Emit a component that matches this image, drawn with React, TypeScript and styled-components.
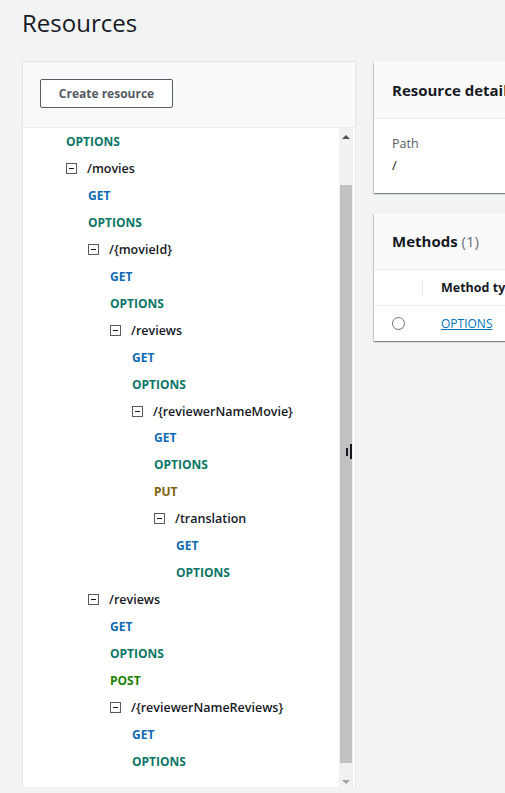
import styled, { createGlobalStyle } from 'styled-components';

const GlobalStyle = createGlobalStyle`
    html, body{
        margin: 0;
        padding: 0;
        background: #f2f3f3;
        font-family: "Open Sans", "Noto Sans", Arial, sans-serif;
        color: #16191f;
        overflow: hidden;
    }
`;

type Method = 'GET' | 'OPTIONS' | 'PUT' | 'POST';
type Row = { kind: 'method'; name: Method; depth: number } | { kind: 'resource'; path: string; depth: number };

const rows: Row[] = [
    { kind: 'method', name: 'OPTIONS', depth: 0 },
    { kind: 'resource', path: '/movies', depth: 0 },
    { kind: 'method', name: 'GET', depth: 1 },
    { kind: 'method', name: 'OPTIONS', depth: 1 },
    { kind: 'resource', path: '/{movieId}', depth: 1 },
    { kind: 'method', name: 'GET', depth: 2 },
    { kind: 'method', name: 'OPTIONS', depth: 2 },
    { kind: 'resource', path: '/reviews', depth: 2 },
    { kind: 'method', name: 'GET', depth: 3 },
    { kind: 'method', name: 'OPTIONS', depth: 3 },
    { kind: 'resource', path: '/{reviewerNameMovie}', depth: 3 },
    { kind: 'method', name: 'GET', depth: 4 },
    { kind: 'method', name: 'OPTIONS', depth: 4 },
    { kind: 'method', name: 'PUT', depth: 4 },
    { kind: 'resource', path: '/translation', depth: 4 },
    { kind: 'method', name: 'GET', depth: 5 },
    { kind: 'method', name: 'OPTIONS', depth: 5 },
    { kind: 'resource', path: '/reviews', depth: 1 },
    { kind: 'method', name: 'GET', depth: 2 },
    { kind: 'method', name: 'OPTIONS', depth: 2 },
    { kind: 'method', name: 'POST', depth: 2 },
    { kind: 'resource', path: '/{reviewerNameReviews}', depth: 2 },
    { kind: 'method', name: 'GET', depth: 3 },
    { kind: 'method', name: 'OPTIONS', depth: 3 },
];

const methodColors: Record<Method, string> = {
    GET: '#0f6ab4',
    OPTIONS: '#0b7667',
    PUT: '#7d6410',
    POST: '#1d8102',
};

export default function App() {
    return (
        <Page>
            <GlobalStyle />
            <Title>Resources</Title>
            <Columns>
                <TreePanel>
                    <TreeHeader>
                        <CreateButton>Create resource</CreateButton>
                    </TreeHeader>
                    <TreeBody>
                        <TreeList>
                            {rows.map((row, i) => (
                                <TreeRow key={i} $depth={row.depth}>
                                    {row.kind === 'method' ? (
                                        <MethodName $color={methodColors[row.name]}>{row.name}</MethodName>
                                    ) : (
                                        <>
                                            <Expander>
                                                <svg width="11" height="11" viewBox="0 0 11 11">
                                                    <rect x="0.5" y="0.5" width="10" height="10" fill="#fff" stroke="#545b64" />
                                                    <rect x="3" y="5" width="5" height="1" fill="#16191f" />
                                                </svg>
                                            </Expander>
                                            <ResourcePath>{row.path}</ResourcePath>
                                        </>
                                    )}
                                </TreeRow>
                            ))}
                        </TreeList>
                        <Scrollbar>
                            <ScrollArrow $up />
                            <ScrollTrack>
                                <ScrollThumb />
                            </ScrollTrack>
                            <ScrollArrow />
                        </Scrollbar>
                    </TreeBody>
                    <ResizeHandle>
                        <span className="short" />
                        <span className="tall" />
                    </ResizeHandle>
                </TreePanel>
                <RightColumn>
                    <Card>
                        <CardHeader>
                            <CardTitle>Resource details</CardTitle>
                        </CardHeader>
                        <CardBody>
                            <FieldLabel>Path</FieldLabel>
                            <FieldValue>/</FieldValue>
                        </CardBody>
                    </Card>
                    <Card>
                        <CardHeader>
                            <CardTitle>Methods <Count>(1)</Count></CardTitle>
                        </CardHeader>
                        <TableHead>
                            <SelectCell><Divider /></SelectCell>
                            <HeadCell>Method type</HeadCell>
                        </TableHead>
                        <TableRow>
                            <SelectCell><Radio /></SelectCell>
                            <LinkCell>OPTIONS</LinkCell>
                        </TableRow>
                    </Card>
                </RightColumn>
            </Columns>
        </Page>
    );
}

const Page = styled.div`
    padding: 6px 0 0 22px;
    height: 787px;
    box-sizing: border-box;
`;

const Title = styled.h1`
    margin: 0;
    font-size: 24px;
    font-weight: 400;
    line-height: 34px;
    color: #16191f;
`;

const Columns = styled.div`
    display: flex;
    align-items: flex-start;
    gap: 18px;
    margin-top: 21px;
`;

const TreePanel = styled.div`
    position: relative;
    flex: 0 0 334px;
    height: 731px;
    box-sizing: border-box;
    background: #fff;
    border: 1px solid #e4e6e6;
    border-bottom: 2px solid #aab7b8;
    display: flex;
    flex-direction: column;
`;

const TreeHeader = styled.div`
    background: #fafafa;
    border-bottom: 1px solid #eaeded;
    padding: 17px 0 19px 17px;
`;

const CreateButton = styled.button`
    width: 133px;
    height: 29px;
    background: #fff;
    border: 1px solid #545b64;
    border-radius: 2px;
    font-family: inherit;
    font-size: 12px;
    font-weight: 700;
    color: #545b64;
    padding: 0;
    cursor: pointer;
`;

const TreeBody = styled.div`
    flex: 1;
    display: flex;
    overflow: hidden;
`;

const TreeList = styled.div`
    flex: 1;
    overflow: hidden;
`;

const TreeRow = styled.div<{ $depth: number }>`
    height: 26.96px;
    flex-shrink: 0;
    display: flex;
    align-items: center;
    padding-left: ${({ $depth }) => 43 + $depth * 22}px;
`;

const MethodName = styled.span<{ $color: string }>`
    font-size: 12px;
    font-weight: 700;
    color: ${({ $color }) => $color};
`;

const Expander = styled.span`
    display: inline-flex;
    width: 11px;
    height: 11px;
    margin-right: 10px;
`;

const ResourcePath = styled.span`
    font-size: 12.5px;
    font-weight: 600;
    color: #16191f;
`;

const Scrollbar = styled.div`
    width: 14px;
    margin-right: 2px;
    background: #f1f1f1;
    display: flex;
    flex-direction: column;
`;

const ScrollArrow = styled.div<{ $up?: boolean }>`
    height: 17px;
    display: flex;
    align-items: center;
    justify-content: center;
    &::before{
        content: '';
        border-left: 4px solid transparent;
        border-right: 4px solid transparent;
        ${({ $up }) => $up ? 'border-bottom: 4px solid #505050;' : 'border-top: 4px solid #a3a3a3;'}
    }
`;

const ScrollTrack = styled.div`
    flex: 1;
    padding: 40px 1px 10px;
    display: flex;
`;

const ScrollThumb = styled.div`
    flex: 1;
    background: #c1c1c1;
`;

const ResizeHandle = styled.div`
    position: absolute;
    right: 3px;
    top: 382px;
    height: 15px;
    display: flex;
    align-items: center;
    gap: 2px;
    .short{
        width: 2px;
        height: 8px;
        background: #16191f;
    }
    .tall{
        width: 2px;
        height: 15px;
        background: #16191f;
    }
`;

const RightColumn = styled.div`
    flex: 0 0 420px;
    display: flex;
    flex-direction: column;
    gap: 20px;
    margin-top: 1px;
`;

const Card = styled.div`
    background: #fff;
    box-shadow: 0 1px 1px 0 rgba(0, 28, 36, 0.3), 1px 1px 1px 0 rgba(0, 28, 36, 0.15), -1px 1px 1px 0 rgba(0, 28, 36, 0.15);
`;

const CardHeader = styled.div`
    background: #fafafa;
    border-bottom: 1px solid #eaeded;
    padding: 0 18px;
    height: 56px;
    display: flex;
    align-items: center;
`;

const CardTitle = styled.h2`
    margin: 0;
    font-size: 15px;
    font-weight: 700;
    color: #16191f;
`;

const Count = styled.span`
    font-weight: 400;
    color: #687078;
`;

const CardBody = styled.div`
    padding: 15px 18px 17px;
`;

const FieldLabel = styled.div`
    font-size: 12.5px;
    color: #545b64;
    line-height: 20px;
`;

const FieldValue = styled.div`
    font-size: 13px;
    color: #16191f;
    line-height: 22px;
`;

const TableHead = styled.div`
    display: flex;
    align-items: center;
    height: 35px;
    border-bottom: 1px solid #eaeded;
`;

const TableRow = styled.div`
    display: flex;
    align-items: center;
    height: 35px;
`;

const SelectCell = styled.div`
    width: 67px;
    height: 100%;
    display: flex;
    align-items: center;
    justify-content: flex-start;
    padding-left: 18px;
    box-sizing: border-box;
`;

const Divider = styled.span`
    margin-left: 30px;
    width: 1px;
    height: 16px;
    background: #eaeded;
`;

const HeadCell = styled.div`
    font-size: 12.5px;
    font-weight: 700;
    color: #16191f;
`;

const Radio = styled.span`
    width: 11px;
    height: 11px;
    border: 1px solid #687078;
    border-radius: 50%;
`;

const LinkCell = styled.a`
    font-size: 12px;
    color: #0073bb;
    text-decoration: underline;
    cursor: pointer;
`;
